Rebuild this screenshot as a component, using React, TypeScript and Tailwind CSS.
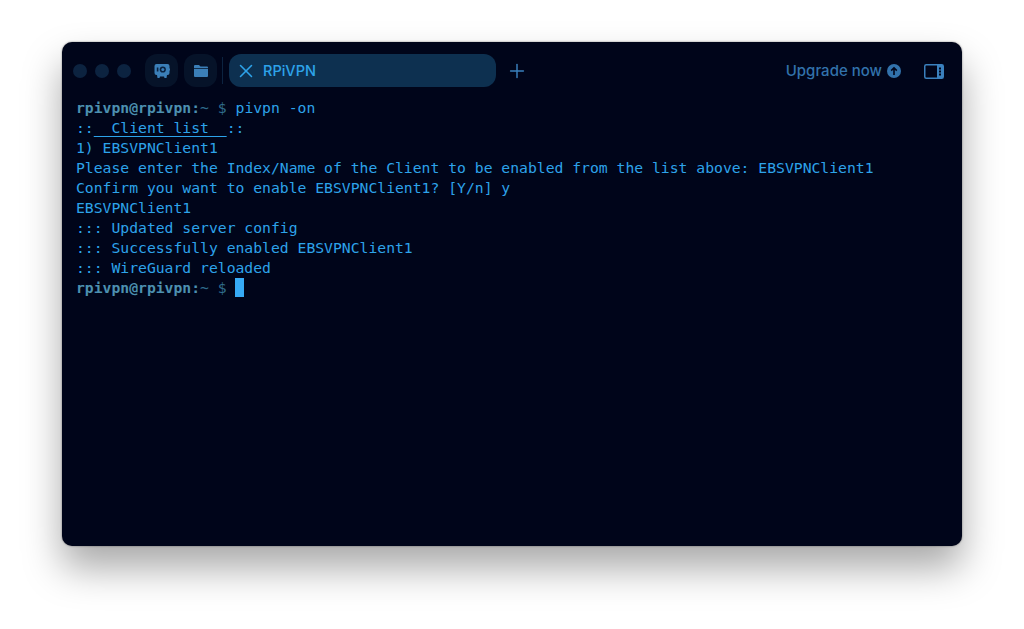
import { Plus, X } from "lucide-react";

const mono = "font-['DejaVu_Sans_Mono',monospace]";

function Prompt({ children }: { children?: React.ReactNode }) {
  return (
    <div className="h-5 whitespace-pre">
      <span className="font-bold text-[#4c90b0]">rpivpn@rpivpn:</span>
      <span className="text-[#2f6c8c]">~ $ </span>
      {children}
    </div>
  );
}

function RecordIcon() {
  return (
    <svg width="16" height="14" viewBox="0 0 16 14" fill="none">
      <path
        d="M2.500 0h11a2 2 0 0 1 2 2v2.200l.5.500v1.600l-.5.500V9a2 2 0 0 1-2 2h-.5l-.5 3h-2l-.5-1.500h-4L5.500 14h-2L3 11h-.5a2 2 0 0 1-2-2V2a2 2 0 0 1 2-2z"
        fill="#3b7fb8"
      />
      <circle cx="8.800" cy="5.500" r="3.100" fill="#0a2240" />
      <circle cx="8.800" cy="5.500" r="1.500" fill="#3b7fb8" />
      <rect x="2.800" y="3.500" width="1.600" height="4" fill="#0a2240" />
    </svg>
  );
}

function FolderIcon() {
  return (
    <svg width="14" height="12" viewBox="0 0 14 12">
      <path d="M1 0h4l1.500 1.500H13a1 1 0 0 1 1 1V3H0V1a1 1 0 0 1 1-1z" fill="#3b7fb8" />
      <path d="M0 3.700h14V11a1 1 0 0 1-1 1H1a1 1 0 0 1-1-1z" fill="#3b7fb8" />
    </svg>
  );
}

function UpgradeIcon() {
  return (
    <svg width="14" height="14" viewBox="0 0 14 14">
      <circle cx="7" cy="7" r="7" fill="#3272ab" />
      <path d="M7 11V4M4.200 6.600 7 3.800l2.800 2.800" stroke="#00051a" strokeWidth="1.600" fill="none" />
    </svg>
  );
}

function PanelIcon() {
  return (
    <svg width="20" height="15" viewBox="0 0 20 15">
      <rect x="0.750" y="0.750" width="18.500" height="13.500" rx="1.500" fill="none" stroke="#3a80bd" strokeWidth="1.500" />
      <rect x="13" y="1" width="6" height="13" fill="#3a80bd" />
      <rect x="15" y="3.500" width="2" height="2" fill="#00051a" />
      <rect x="15" y="6.500" width="2" height="2" fill="#00051a" />
      <rect x="15" y="9.500" width="2" height="2" fill="#00051a" />
    </svg>
  );
}

export default function App() {
  return (
    <div className="h-[629px] w-[1024px] overflow-hidden bg-white pl-[62px] pt-[42px]">
      <div className="flex h-[504px] w-[900px] flex-col rounded-[10px] bg-[#00051a] shadow-[0_22px_38px_rgba(0,0,0,0.34),0_0_2px_rgba(0,0,0,0.5)]">
        <div className="flex h-[56px] items-center pl-[11px] pr-[18px] pt-px font-['Inter',sans-serif]">
          <div className="flex gap-2">
            <span className="size-[14px] rounded-full bg-[#0c2340]" />
            <span className="size-[14px] rounded-full bg-[#0c2340]" />
            <span className="size-[14px] rounded-full bg-[#0c2340]" />
          </div>
          <button className="ml-[14px] grid size-[33px] place-items-center rounded-xl bg-[#061329]">
            <RecordIcon />
          </button>
          <button className="ml-[6px] grid size-[33px] place-items-center rounded-xl bg-[#061329]">
            <FolderIcon />
          </button>
          <span className="ml-[5px] h-[27px] w-px bg-[#0c2340]" />
          <div className="ml-[6px] flex h-[33px] w-[267px] items-center rounded-xl bg-[#0d3050] pl-[6px] pt-px text-[14.500px] font-medium text-[#2da3ea]">
            <X className="size-[22px]" strokeWidth={1.700} />
            <span className="ml-[6px]">RPiVPN</span>
          </div>
          <Plus className="ml-[10px] mt-px size-[22px] text-[#3a80bd]" strokeWidth={1.600} />
          <span className="ml-auto mt-px text-[15px] font-medium text-[#3272ab]">Upgrade now</span>
          <span className="ml-[5px] mt-px"><UpgradeIcon /></span>
          <span className="ml-[23px] mt-px"><PanelIcon /></span>
        </div>
        <div className={`px-[14px] text-[14.720px] leading-5 text-[#2da3ea] ${mono}`}>
          <Prompt>pivpn -on</Prompt>
          <div className="h-5 whitespace-pre">
            {"::"}
            <span className="underline underline-offset-[3px]">{"  Client list  "}</span>
            {"::"}
          </div>
          <div className="h-5 whitespace-pre">1) EBSVPNClient1</div>
          <div className="h-5 whitespace-pre">Please enter the Index/Name of the Client to be enabled from the list above: EBSVPNClient1</div>
          <div className="h-5 whitespace-pre">Confirm you want to enable EBSVPNClient1? [Y/n] y</div>
          <div className="h-5 whitespace-pre">EBSVPNClient1</div>
          <div className="h-5 whitespace-pre">::: Updated server config</div>
          <div className="h-5 whitespace-pre">::: Successfully enabled EBSVPNClient1</div>
          <div className="h-5 whitespace-pre">::: WireGuard reloaded</div>
          <Prompt>
            <span className="-ml-px inline-block h-[19px] w-[9px] bg-[#36aaf5] align-top" />
          </Prompt>
        </div>
      </div>
    </div>
  );
}
